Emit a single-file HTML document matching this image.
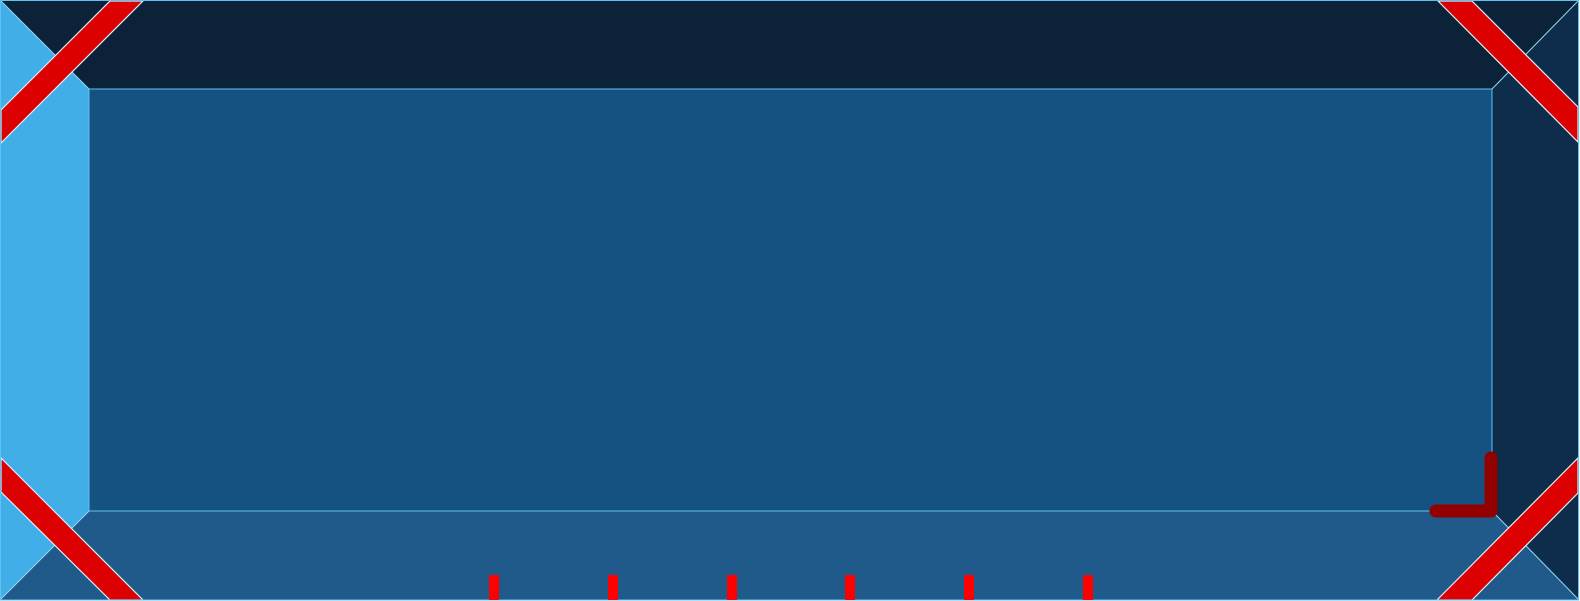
<!DOCTYPE html>
<html><head><style>html,body{margin:0;padding:0;background:#fff;}svg{display:block}</style></head>
<body>
<svg width="1580" height="601" viewBox="0 0 1580 601" xmlns="http://www.w3.org/2000/svg">
<polygon points="0,0 1579,0 1492,89 89,89" fill="#0c2238"/>
<polygon points="1579,0 1579,600 1492,511 1492,89" fill="#0e2d4b"/>
<polygon points="0,0 89,89 89,511 0,600" fill="#42aee8"/>
<polygon points="0,600 89,511 1492,511 1579,600" fill="#1f5a8a"/>
<rect x="89" y="89" width="1403" height="422" fill="#155281" stroke="#5cc3f3" stroke-width="1"/>
<g stroke="#8fd8f5" stroke-width="1" fill="none">
<line x1="0" y1="0" x2="89" y2="89"/>
<line x1="1579" y1="0" x2="1492" y2="89"/>
<line x1="1492" y1="511" x2="1579" y2="600"/>
<line x1="89" y1="511" x2="0" y2="600"/>
</g>
<g fill="#dd0000" stroke="#d8f0fa" stroke-width="1.2">
<polygon points="110,1 143,1 1,143 1,110"/>
<polygon points="1438,1 1472,1 1578,107 1578,142"/>
<polygon points="1437,600 1472,600 1578,493 1578,458"/>
<polygon points="1,458 1,492 110,600 143,600"/>
</g>
<rect x="0.5" y="0.5" width="1578" height="599.5" fill="none" stroke="#5cc3f3" stroke-width="1"/>
<path d="M1436,511 H1491 V458" fill="none" stroke="#920000" stroke-width="13" stroke-linecap="round" stroke-linejoin="round"/>
<g fill="#ff0000">
<rect x="489" y="575" width="10" height="25"/>
<rect x="608" y="575" width="10" height="25"/>
<rect x="727" y="575" width="10" height="25"/>
<rect x="845" y="575" width="10" height="25"/>
<rect x="964" y="575" width="10" height="25"/>
<rect x="1083" y="575" width="10" height="25"/>
</g>
</svg>
</body></html>
